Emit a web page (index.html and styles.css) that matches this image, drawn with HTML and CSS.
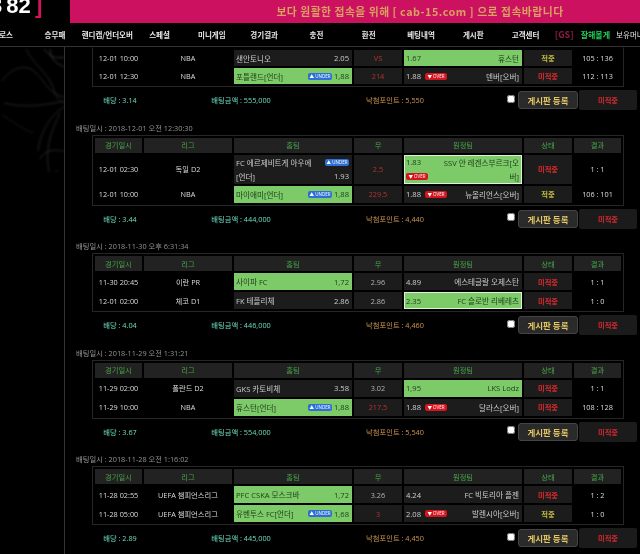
FILE: index.html
```html
<!DOCTYPE html>
<html>
<head>
    <meta charset="utf-8">
    <title>배팅내역</title>
    <link rel="stylesheet" href="styles.css">
</head>
<body>
    <div class="top">
        <div class="logo"><div class="mark">3 82 <span>]</span></div></div>
        <div class="banner">보다 원활한 접속을 위해 [ cab-15.com ] 으로 접속바랍니다</div>
    </div>
    <div class="nav">
        <a>크로스</a>
        <a>승무패</a>
        <a>핸디캡/언더오버</a>
        <a>스페셜</a>
        <a>미니게임</a>
        <a>경기결과</a>
        <a>충전</a>
        <a>환전</a>
        <a>베팅내역</a>
        <a>게시판</a>
        <a>고객센터</a>
        <span class="gs">[GS]</span>
        <span class="nick">잘해볼게</span>
        <span class="money">보유머니</span>
    </div>
    <div class="main">
        <div class="side">
            <svg class="smoke" width="64" height="125" viewBox="0 0 64 125" fill="none" stroke="#333">
                <path d="M26 2c6 14 20 22 26 36s4 14 12 18"/>
                <path d="M2 34c10-14 24-18 34-8s14 22 28 24"/>
                <path d="M4 56c16 4 34 4 60-2"/>
                <path d="M64 60c-14 8-24 26-26 44"/>
                <path d="M60 66c-8 18-14 30-12 52s6 4 10 6"/>
                <path d="M40 112c4-8 12-10 24-8"/>
                <path d="M44 2c6 8 12 10 20 8M50 2c0 10 6 14 14 18" stroke="#444"/>
                <path d="M2 68c10 6 20 14 32 18" stroke="#222"/>
            </svg>
        </div>
        <div class="list">

            <div class="block">
                <table class="bets cut">
                    <tr>
                        <td class="plain">12-01 10:00</td>
                        <td class="plain">NBA</td>
                        <td class="team"><div class="line"><span>샌안토니오</span><span>2.05</span></div></td>
                        <td class="draw red">VS</td>
                        <td class="team on"><div class="line"><span>1.67</span><span>휴스턴</span></div></td>
                        <td class="state hit">적중</td>
                        <td class="plain">105 : 136</td>
                    </tr>
                    <tr>
                        <td class="plain">12-01 12:30</td>
                        <td class="plain">NBA</td>
                        <td class="team on"><div class="line"><span>포틀랜드[언더]</span><span class="tail"><i class="under">▲ UNDER</i>1,88</span></div></td>
                        <td class="draw red">214</td>
                        <td class="team"><div class="line"><span class="tail left">1.88<i class="over">▼ OVER</i></span><span>덴버[오버]</span></div></td>
                        <td class="state miss">미적중</td>
                        <td class="plain">112 : 113</td>
                    </tr>
                </table>
                <div class="sum">
                    <span class="teal">배당 : 3.14</span>
                    <span class="teal">배팅금액 : 555,000</span>
                    <span class="orange">낙첨포인트 : 5,550</span>
                    <input type="checkbox">
                    <button class="post">게시판 등록</button>
                    <button class="result">미적중</button>
                </div>
            </div>

            <div class="block">
                <div class="stamp">배팅일시 : 2018-12-01 오전 12:30:30</div>
                <table class="bets">
                    <tr>
                        <th>경기일시</th><th>리그</th><th>홈팀</th><th>무</th><th>원정팀</th><th>상태</th><th>결과</th>
                    </tr>
                    <tr class="tall">
                        <td class="plain">12-01 02:30</td>
                        <td class="plain">독일 D2</td>
                        <td class="team">
                            <div class="line"><span>FC 에르제비트게 아우에</span><i class="under">▲ UNDER</i></div>
                            <div class="line"><span>[언더]</span><span>1.93</span></div>
                        </td>
                        <td class="draw red">2.5</td>
                        <td class="team on edge">
                            <div class="line"><span>1.83</span><span>SSV 얀 레겐스부르크[오</span></div>
                            <div class="line"><i class="over">▼ OVER</i><span>버]</span></div>
                        </td>
                        <td class="state miss">미적중</td>
                        <td class="plain">1 : 1</td>
                    </tr>
                    <tr>
                        <td class="plain">12-01 10:00</td>
                        <td class="plain">NBA</td>
                        <td class="team on"><div class="line"><span>마이애미[언더]</span><span class="tail"><i class="under">▲ UNDER</i>1,88</span></div></td>
                        <td class="draw red">229.5</td>
                        <td class="team"><div class="line"><span class="tail left">1.88<i class="over">▼ OVER</i></span><span>뉴올리언스[오버]</span></div></td>
                        <td class="state hit">적중</td>
                        <td class="plain">106 : 101</td>
                    </tr>
                </table>
                <div class="sum">
                    <span class="teal">배당 : 3.44</span>
                    <span class="teal">배팅금액 : 444,000</span>
                    <span class="orange">낙첨포인트 : 4,440</span>
                    <input type="checkbox">
                    <button class="post">게시판 등록</button>
                    <button class="result">미적중</button>
                </div>
            </div>

            <div class="block">
                <div class="stamp">배팅일시 : 2018-11-30 오후 6:31:34</div>
                <table class="bets">
                    <tr>
                        <th>경기일시</th><th>리그</th><th>홈팀</th><th>무</th><th>원정팀</th><th>상태</th><th>결과</th>
                    </tr>
                    <tr>
                        <td class="plain">11-30 20:45</td>
                        <td class="plain">이란 PR</td>
                        <td class="team on"><div class="line"><span>사이파 FC</span><span>1,72</span></div></td>
                        <td class="draw">2.96</td>
                        <td class="team"><div class="line"><span>4.89</span><span>에스테글랄 오제스탄</span></div></td>
                        <td class="state miss">미적중</td>
                        <td class="plain">1 : 1</td>
                    </tr>
                    <tr>
                        <td class="plain">12-01 02:00</td>
                        <td class="plain">체코 D1</td>
                        <td class="team"><div class="line"><span>FK 테플리체</span><span>2.86</span></div></td>
                        <td class="draw">2.86</td>
                        <td class="team on edge"><div class="line"><span>2.35</span><span>FC 슬로반 리베레츠</span></div></td>
                        <td class="state miss">미적중</td>
                        <td class="plain">1 : 0</td>
                    </tr>
                </table>
                <div class="sum">
                    <span class="teal">배당 : 4.04</span>
                    <span class="teal">배팅금액 : 446,000</span>
                    <span class="orange">낙첨포인트 : 4,460</span>
                    <input type="checkbox">
                    <button class="post">게시판 등록</button>
                    <button class="result">미적중</button>
                </div>
            </div>

            <div class="block">
                <div class="stamp">배팅일시 : 2018-11-29 오전 1:31:21</div>
                <table class="bets">
                    <tr>
                        <th>경기일시</th><th>리그</th><th>홈팀</th><th>무</th><th>원정팀</th><th>상태</th><th>결과</th>
                    </tr>
                    <tr>
                        <td class="plain">11-29 02:00</td>
                        <td class="plain">폴란드 D2</td>
                        <td class="team"><div class="line"><span>GKS 카토비체</span><span>3.58</span></div></td>
                        <td class="draw">3.02</td>
                        <td class="team on"><div class="line"><span>1,95</span><span>LKS Lodz</span></div></td>
                        <td class="state miss">미적중</td>
                        <td class="plain">1 : 1</td>
                    </tr>
                    <tr>
                        <td class="plain">11-29 10:00</td>
                        <td class="plain">NBA</td>
                        <td class="team on"><div class="line"><span>휴스턴[언더]</span><span class="tail"><i class="under">▲ UNDER</i>1,88</span></div></td>
                        <td class="draw red">217.5</td>
                        <td class="team"><div class="line"><span class="tail left">1.88<i class="over">▼ OVER</i></span><span>달라스[오버]</span></div></td>
                        <td class="state miss">미적중</td>
                        <td class="plain">108 : 128</td>
                    </tr>
                </table>
                <div class="sum">
                    <span class="teal">배당 : 3.67</span>
                    <span class="teal">배팅금액 : 554,000</span>
                    <span class="orange">낙첨포인트 : 5,540</span>
                    <input type="checkbox">
                    <button class="post">게시판 등록</button>
                    <button class="result">미적중</button>
                </div>
            </div>

            <div class="block">
                <div class="stamp">배팅일시 : 2018-11-28 오전 1:16:02</div>
                <table class="bets">
                    <tr>
                        <th>경기일시</th><th>리그</th><th>홈팀</th><th>무</th><th>원정팀</th><th>상태</th><th>결과</th>
                    </tr>
                    <tr>
                        <td class="plain">11-28 02:55</td>
                        <td class="plain">UEFA 챔피언스리그</td>
                        <td class="team on"><div class="line"><span>PFC CSKA 모스크바</span><span>1,72</span></div></td>
                        <td class="draw">3.26</td>
                        <td class="team"><div class="line"><span>4.24</span><span>FC 빅토리아 플젠</span></div></td>
                        <td class="state miss">미적중</td>
                        <td class="plain">1 : 2</td>
                    </tr>
                    <tr>
                        <td class="plain">11-28 05:00</td>
                        <td class="plain">UEFA 챔피언스리그</td>
                        <td class="team on"><div class="line"><span>유벤투스 FC[언더]</span><span class="tail"><i class="under">▲ UNDER</i>1,68</span></div></td>
                        <td class="draw red">3</td>
                        <td class="team"><div class="line"><span class="tail left">2.08<i class="over">▼ OVER</i></span><span>발렌시아[오버]</span></div></td>
                        <td class="state hit">적중</td>
                        <td class="plain">1 : 0</td>
                    </tr>
                </table>
                <div class="sum">
                    <span class="teal">배당 : 2.89</span>
                    <span class="teal">배팅금액 : 445,000</span>
                    <span class="orange">낙첨포인트 : 4,450</span>
                    <input type="checkbox">
                    <button class="post">게시판 등록</button>
                    <button class="result">미적중</button>
                </div>
            </div>

        </div>
    </div>
</body>
</html>
```

FILE: styles.css
```css
html, body {
    margin: 0;
    height: 100%;
    overflow: hidden;
}
body {
    background: #000;
    color: #ccc;
    font-family: "Open Sans", "Noto Sans CJK KR", sans-serif;
    font-size: 7.3px;
    filter: blur(0.5px);
}

/* top strip */
.top {
    display: flex;
    height: 23px;
}
.logo {
    width: 70px;
    flex: none;
    overflow: hidden;
}
.mark {
    margin-left: -10px;
    color: #fff;
    font-family: "Liberation Sans", sans-serif;
    font-size: 22px;
    font-weight: bold;
    line-height: 11px;
    word-spacing: -2px;
    white-space: nowrap;
}
.mark span {
    color: #d3135f;
}
.banner {
    flex: 1;
    background: #cb1160;
    color: #d9a25f;
    font-family: "Noto Sans CJK KR", sans-serif;
    font-size: 10.8px;
    font-weight: bold;
    letter-spacing: 0.5px;
    line-height: 23px;
    text-align: center;
    padding-left: 130px;
}

/* menu */
.nav {
    display: flex;
    align-items: center;
    height: 23px;
    margin-left: -23.5px;
    border-bottom: 1px solid #333;
    font-family: "Noto Sans CJK KR", sans-serif;
    font-size: 7.5px;
    font-weight: bold;
    white-space: nowrap;
    color: #e6e6e6;
}
.nav a {
    width: 52.3px;
    flex: none;
    text-align: center;
}
.gs {
    margin-left: 3px;
    color: #8c1c40;
    font-size: 9px;
}
.nick {
    margin-left: 7px;
    color: #22d257;
    font-size: 8px;
}
.money {
    margin-left: 6px;
    font-weight: normal;
}

.main {
    display: flex;
    height: 507px;
    overflow: hidden;
}
.side {
    width: 64px;
    flex: none;
    border-right: 1px solid #333;
}
.smoke {
    display: block;
    opacity: 0.8;
    filter: blur(1px);
}
.list {
    flex: none;
    width: 575px;
}

.block {
    margin-bottom: 11.5px;
}
.stamp {
    height: 13px;
    line-height: 13px;
    margin-left: 11px;
    color: #959595;
}

/* bet table */
.bets {
    table-layout: fixed;
    width: 532px;
    margin-left: 27px;
    border: 1px solid #262626;
    border-spacing: 2px;
    text-align: center;
    white-space: nowrap;
}
.bets th, .bets td {
    padding: 0;
    overflow: hidden;
}
.bets th {
    height: 15px;
    background: #222;
    color: #46a247;
    font-family: "Noto Sans CJK KR", sans-serif;
    font-weight: normal;
}
.bets th:nth-child(1) { width: 47px; }
.bets th:nth-child(2) { width: 88px; }
.bets th:nth-child(3) { width: 118px; }
.bets th:nth-child(4) { width: 48px; }
.bets th:nth-child(5) { width: 118px; }
.bets th:nth-child(6) { width: 48px; }
.bets th:nth-child(7) { width: 47px; }
.bets td {
    height: 17px;
}
.bets .tall td {
    height: 29px;
}
.cut {
    border-top-color: transparent;
}
.cut td {
    height: 16px;
}
.cut tr:first-child td:nth-child(1) { width: 47px; }
.cut tr:first-child td:nth-child(2) { width: 88px; }
.cut tr:first-child td:nth-child(3) { width: 118px; }
.cut tr:first-child td:nth-child(4) { width: 48px; }
.cut tr:first-child td:nth-child(5) { width: 118px; }
.cut tr:first-child td:nth-child(6) { width: 48px; }
.cut tr:first-child td:nth-child(7) { width: 47px; }

.plain {
    color: #dcdcdc;
}
.team {
    background: #1c1c1c;
    text-align: left;
    font-size: 7.6px;
}
.line {
    display: flex;
    justify-content: space-between;
    align-items: center;
    height: 13px;
    padding: 0 3px 0 2px;
}
.tall .line {
    height: 14px;
}
.on {
    background: #7ccb68;
    color: #1f3a1a;
}
.edge {
    box-shadow: inset 0 0 0 1px #dff0da;
}
.draw {
    background: #1c1c1c;
    color: #b4b4b4;
}
.draw.red {
    color: #b5352f;
}
.state {
    background: #1c1c1c;
    font-family: "Noto Sans CJK KR", sans-serif;
    font-weight: bold;
}
.hit {
    color: #c4bd3e;
}
.miss {
    color: #dd2a2d;
}
.tail {
    display: flex;
    align-items: center;
    gap: 2px;
}
.tail.left i {
    margin-left: 2px;
}
.under, .over {
    display: block;
    width: 24px;
    border-radius: 2px;
    color: #fff;
    font-size: 4.5px;
    font-style: normal;
    line-height: 7px;
    text-align: center;
}
.under {
    background: #2c6fd6;
}
.over {
    width: 22px;
    background: #d4141f;
}

/* summary under each table */
.sum {
    display: grid;
    grid-template-columns: 110px 132px 176px 35px 60px 59px;
    align-items: center;
    height: 20px;
    margin-top: 3px;
    text-align: center;
}
.teal {
    color: #6cdcc0;
}
.orange {
    color: #d09650;
}
.sum input {
    width: 8px;
    height: 8px;
    margin: 0 3px 3px 0;
    justify-self: end;
}
.sum button {
    padding: 0;
    font-family: "Noto Sans CJK KR", sans-serif;
    font-weight: bold;
}
.post {
    height: 18px;
    background: #2a2a2a;
    border: 1px solid #444;
    border-radius: 3px;
    color: #e3c765;
    font-size: 8.5px;
}
.result {
    height: 20px;
    background: #1b1b1b;
    border: none;
    border-radius: 2px;
    margin-left: 1px;
    color: #d42a30;
    font-size: 7.3px;
}
```
